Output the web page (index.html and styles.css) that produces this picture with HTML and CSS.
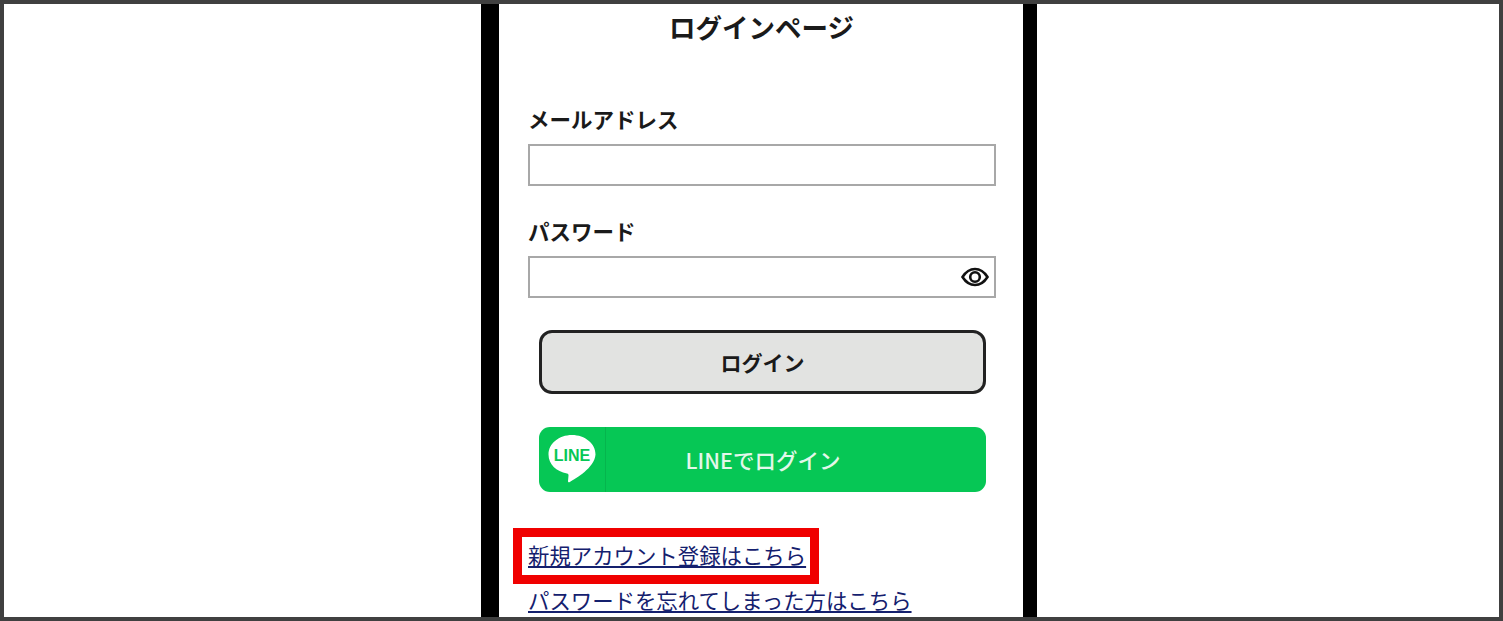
FILE: index.html
```html
<!DOCTYPE html>
<html lang="ja">
<head>
  <meta charset="UTF-8" />
  <title>ログインページ</title>
  <link rel="stylesheet" href="styles.css">
</head>
<body>
  <div class="frame">
    <div class="phone">
      <h1>ログインページ</h1>
      <div class="field">
        <label>メールアドレス</label>
        <input class="input" type="text">
      </div>
      <div class="field">
        <label>パスワード</label>
        <div class="password">
          <input class="input" type="password">
          <svg class="eye" viewBox="0 0 28 20" width="28" height="20" fill="none" stroke="#111" stroke-width="2.6">
            <path d="M1.500 10C5 4.500 9 2 14 2s9 2.500 12.500 8C23 15.500 19 18 14 18S5 15.500 1.500 10z"/>
            <circle cx="14" cy="10" r="4.800"/>
          </svg>
        </div>
      </div>
      <button class="login-btn">ログイン</button>
      <a class="line-btn">
        <span class="line-icon">
          <svg viewBox="0 0 50 56" width="50" height="56">
            <path d="M25 3C12 3 1.500 11.500 1.500 22.500c0 9.500 7.800 17.300 18.500 18.900 1.200.3 1.600 1 1.500 2l-.5 5.600c-.1 1.200.8 1.600 1.800 1 6-3.700 24.700-14 25.700-27.500C48.500 11.500 38 3 25 3z" fill="#fff"/>
            <text x="25" y="29" class="line-mark">LINE</text>
          </svg>
        </span>
        <span class="line-text">LINEでログイン</span>
      </a>
      <div class="links">
        <div class="highlight"><a href="#">新規アカウント登録はこちら</a></div>
        <a class="forgot" href="#">パスワードを忘れてしまった方はこちら</a>
      </div>
    </div>
  </div>
</body>
</html>
```

FILE: styles.css
```css
body {
  margin: 0;
  font-family: "Noto Sans CJK JP", "Noto Sans", sans-serif;
  color: #1a1a1a;
  background: #fff;
}

.frame {
  box-sizing: border-box;
  height: 621px;
  border: 4px solid #404040;
  overflow: hidden;
  background: #fff;
}

.phone {
  box-sizing: border-box;
  width: 556px;
  height: 640px;
  margin-left: 477px;
  border-left: 18px solid #000;
  border-right: 14px solid #000;
  padding: 0 28px 0 29px;
  background: #fff;
}

h1 {
  margin: 0;
  height: 48px;
  line-height: 46px;
  font-size: 26.500px;
  font-weight: 700;
  text-align: center;
}

.field {
  margin-bottom: 26px;
}

.field:first-of-type {
  padding-top: 48px;
}

label {
  display: block;
  height: 44px;
  line-height: 37px;
  font-size: 21.500px;
  font-weight: 700;
}

.input {
  display: block;
  box-sizing: border-box;
  width: 468px;
  height: 42px;
  border: 2px solid #a8a8a8;
  background: #fff;
  padding: 0 8px;
  margin: 0;
  outline: none;
}

.password {
  position: relative;
  width: 468px;
}

.eye {
  position: absolute;
  right: 7px;
  top: 11px;
}

.login-btn {
  display: block;
  box-sizing: border-box;
  width: 447px;
  height: 64px;
  margin: 32px 0 33px 11px;
  border: 3px solid #222;
  border-radius: 13px;
  background: #e2e3e1;
  color: #1a1a1a;
  font-family: inherit;
  font-size: 21px;
  font-weight: 700;
}

.line-btn {
  display: flex;
  width: 447px;
  height: 65px;
  margin-left: 11px;
  border-radius: 11px;
  background: #06c755;
  color: #e3f7ea;
  overflow: hidden;
}

.line-icon {
  display: flex;
  justify-content: center;
  align-items: center;
  flex: none;
  width: 66px;
  border-right: 1px solid #05b54d;
}

.line-mark {
  font-family: "Liberation Sans", sans-serif;
  font-size: 16px;
  font-weight: 700;
  fill: #06c755;
  text-anchor: middle;
}

.line-text {
  flex: 1;
  padding-right: 66px;
  text-align: center;
  line-height: 65px;
  font-size: 21.500px;
  font-weight: 500;
}

.links {
  padding-top: 36px;
  font-size: 21.400px;
}

.links a {
  color: #14206e;
  text-decoration: underline;
}

.highlight {
  box-sizing: border-box;
  width: 306px;
  height: 56px;
  margin-left: -15px;
  padding-left: 6px;
  border: 9px solid #f00000;
  line-height: 35px;
}

.forgot {
  display: block;
  line-height: 32px;
}
```
